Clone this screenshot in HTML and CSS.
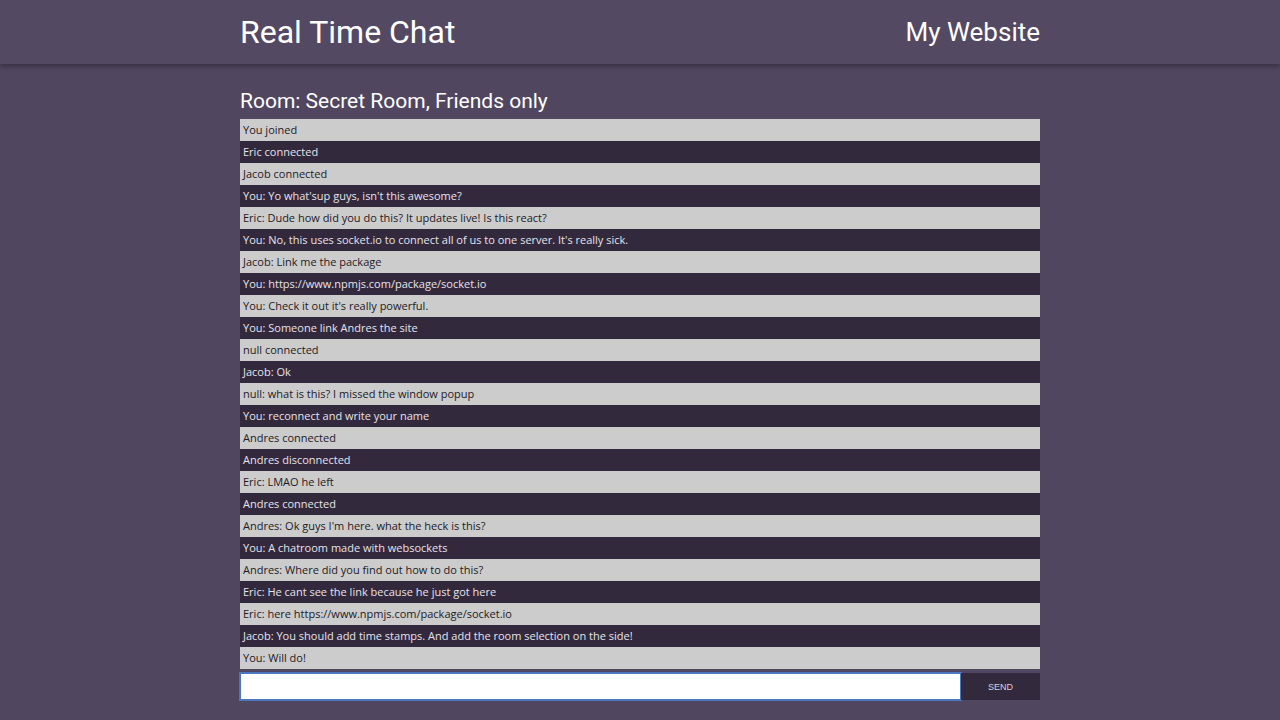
FILE: index.html
```html
<!DOCTYPE html>
<html>
<head>
<meta charset="utf-8">
<title>Real Time Chat</title>
<link rel="stylesheet" href="styles.css">
</head>
<body>
<header class="topbar">
  <div class="topbar-inner">
    <h1 class="brand">Real Time Chat</h1>
    <span class="site">My Website</span>
  </div>
</header>
<main class="chat">
  <h2 class="room">Room: Secret Room, Friends only</h2>
  <ul class="messages">
    <li>You joined</li>
    <li>Eric connected</li>
    <li>Jacob connected</li>
    <li>You: Yo what'sup guys, isn't this awesome?</li>
    <li>Eric: Dude how did you do this? It updates live! Is this react?</li>
    <li>You: No, this uses socket.io to connect all of us to one server. It's really sick.</li>
    <li>Jacob: Link me the package</li>
    <li>You: https://www.npmjs.com/package/socket.io</li>
    <li>You: Check it out it's really powerful.</li>
    <li>You: Someone link Andres the site</li>
    <li>null connected</li>
    <li>Jacob: Ok</li>
    <li>null: what is this? I missed the window popup</li>
    <li>You: reconnect and write your name</li>
    <li>Andres connected</li>
    <li>Andres disconnected</li>
    <li>Eric: LMAO he left</li>
    <li>Andres connected</li>
    <li>Andres: Ok guys I'm here. what the heck is this?</li>
    <li>You: A chatroom made with websockets</li>
    <li>Andres: Where did you find out how to do this?</li>
    <li>Eric: He cant see the link because he just got here</li>
    <li>Eric: here https://www.npmjs.com/package/socket.io</li>
    <li>Jacob: You should add time stamps. And add the room selection on the side!</li>
    <li>You: Will do!</li>
  </ul>
  <form class="composer">
    <input class="msg-input" type="text" autofocus>
    <button class="send" type="button">SEND</button>
  </form>
</main>
</body>
</html>
```
FILE: styles.css
```css
html, body {
  margin: 0;
  padding: 0;
}
body {
  background: #50465f;
  font-family: Roboto, "Liberation Sans", sans-serif;
  height: 720px;
  overflow: hidden;
}
.topbar {
  background: #534963;
  height: 64px;
  box-shadow: 0 2px 5px rgba(0,0,0,0.35);
  position: relative;
  z-index: 1;
}
.topbar-inner {
  width: 800px;
  margin: 0 auto;
  height: 64px;
  display: flex;
  align-items: center;
  justify-content: space-between;
}
.brand {
  margin: 0;
  font-weight: 400;
  font-size: 32px;
  color: #ffffff;
}
.site {
  font-size: 26px;
  color: #ffffff;
}
.chat {
  width: 800px;
  margin: 0 auto;
  padding-top: 25px;
}
.room {
  margin: 0 0 6px 0;
  font-weight: 400;
  font-size: 21px;
  line-height: 24px;
  color: #ffffff;
}
.messages {
  list-style: none;
  margin: 0;
  padding: 0;
}
.messages li {
  height: 22px;
  line-height: 22px;
  padding-left: 3px;
  font-family: "Open Sans", sans-serif;
  font-size: 11px;
  color: #1e1a24;
  background: #cccccc;
  box-sizing: border-box;
  white-space: nowrap;
}
.messages li:nth-child(even) {
  background: #33293d;
  color: #e6e3ea;
}
.composer {
  display: flex;
  margin-top: 4px;
  height: 27px;
}
.msg-input {
  flex: 1;
  margin: 0;
  box-sizing: border-box;
  height: 27px;
  border: 1px solid #4a78c0;
  outline: 1px solid #4a78c0;
  background: #ffffff;
  padding: 0 6px;
  font-size: 13px;
}
.send {
  width: 79px;
  height: 27px;
  margin: 0;
  border: none;
  background: #33293d;
  color: #d4d0da;
  font-family: "Liberation Sans", Arial, sans-serif;
  font-size: 9px;
  padding: 0;
}
```
